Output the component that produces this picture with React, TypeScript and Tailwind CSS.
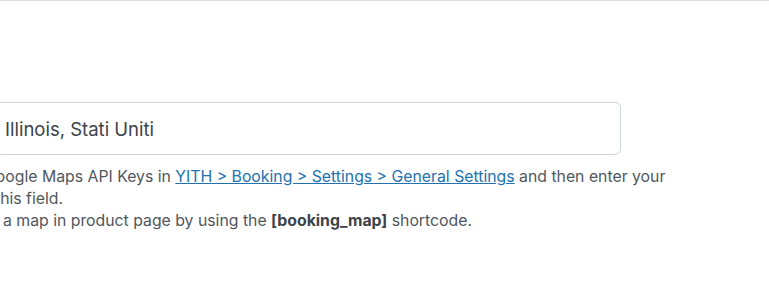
export default function App() {
  return (
    <div className="min-h-[290px] w-[769px] overflow-hidden bg-white border-t border-[#dcdcde]" style={{ fontFamily: 'Inter, "Noto Sans", sans-serif' }}>
      <div className="pt-[101px]">
        <div className="-ml-[5px] w-[626px]">
          <input
            readOnly
            value="Illinois, Stati Uniti"
            className="block h-[53px] w-full rounded-[6px] border border-[#cfd5de] bg-white px-[9px] text-[18.5px] text-[#3c434a] outline-none"
          />
        </div>
        <div className="mt-[11px] text-[15.8px] leading-[22px] text-[#50575e] whitespace-nowrap">
          <div className="-ml-[16px]">
            Google Maps API Keys in{' '}
            <a href="#" className="text-[#2271b1] underline">YITH &gt; Booking &gt; Settings &gt; General Settings</a>{' '}
            and then enter your
          </div>
          <div className="-ml-[5px]">this field.</div>
          <div className="ml-[3px]">a map in product page by using the <strong className="font-bold text-[#3c434a]">[booking_map]</strong> shortcode.</div>
        </div>
      </div>
    </div>
  );
}
